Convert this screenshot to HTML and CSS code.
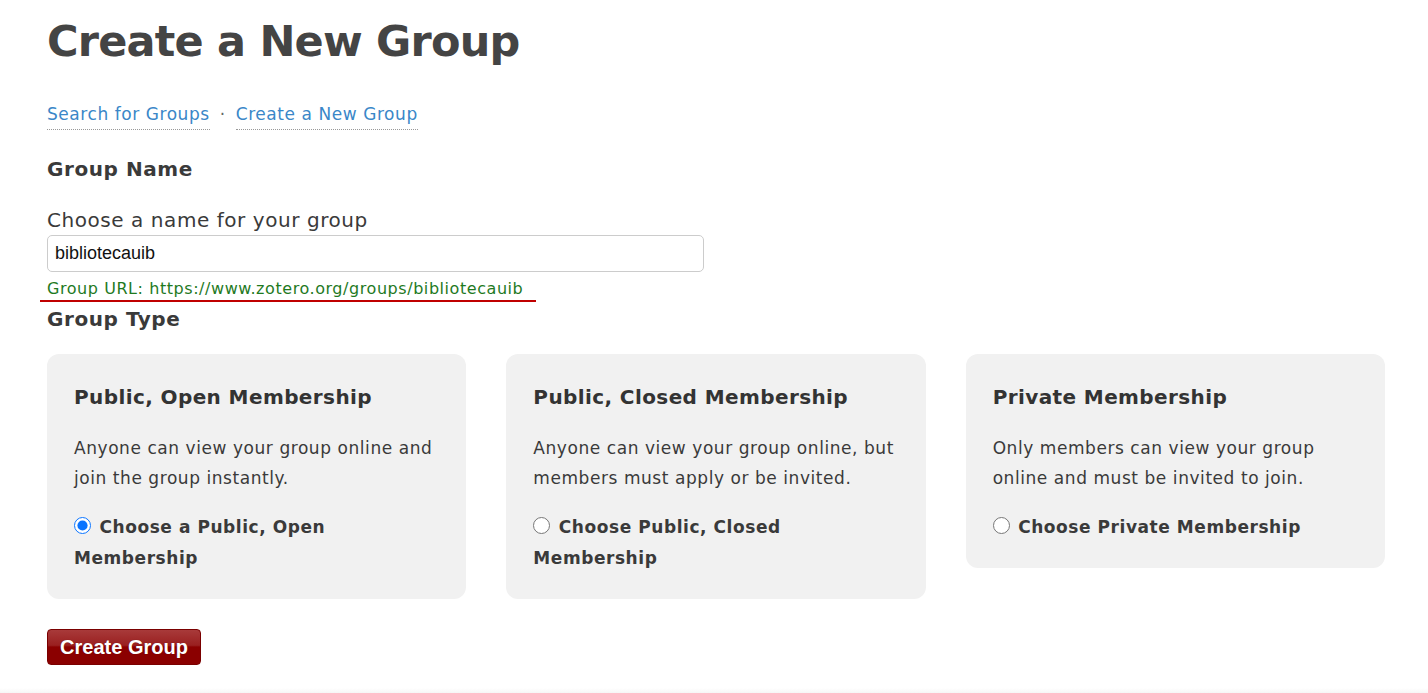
FILE: index.html
```html
<!DOCTYPE html>
<html>
<head>
<meta charset="utf-8">
<link rel="stylesheet" href="styles.css">
</head>
<body>
<main class="page">
  <h1 class="title">Create a New Group</h1>
  <nav class="subnav">
    <a class="subnav-link" href="#">Search for Groups</a>
    <span class="subnav-sep">·</span>
    <a class="subnav-link" href="#">Create a New Group</a>
  </nav>
  <h2 class="section-title">Group Name</h2>
  <label class="field-label" for="name">Choose a name for your group</label>
  <input class="text-input" id="name" type="text" value="bibliotecauib">
  <div class="group-url">Group URL: https://www.zotero.org/groups/bibliotecauib</div>
  <h2 class="section-title type-title">Group Type</h2>
  <div class="cards">
    <div class="card">
      <h3 class="card-title">Public, Open Membership</h3>
      <p class="card-desc">Anyone can view your group online and join the group instantly.</p>
      <label class="card-choice"><input class="radio" type="radio" name="type" checked> Choose a Public, Open Membership</label>
    </div>
    <div class="card">
      <h3 class="card-title">Public, Closed Membership</h3>
      <p class="card-desc">Anyone can view your group online, but members must apply or be invited.</p>
      <label class="card-choice"><input class="radio" type="radio" name="type"> Choose Public, Closed Membership</label>
    </div>
    <div class="card">
      <h3 class="card-title">Private Membership</h3>
      <p class="card-desc">Only members can view your group online and must be invited to join.</p>
      <label class="card-choice"><input class="radio" type="radio" name="type"> Choose Private Membership</label>
    </div>
  </div>
  <button class="submit" type="button">Create Group</button>
</main>
<div class="footer-edge"></div>
</body>
</html>
```
FILE: styles.css
```css
* { box-sizing: border-box; }
html, body { margin: 0; padding: 0; background: #fff; }
body {
  font-family: "DejaVu Sans", Verdana, sans-serif;
  color: #3a3a3a;
  height: 693px;
  overflow: hidden;
  position: relative;
  letter-spacing: 0.035em;
}
.page {
  padding: 0 43px 0 47px;
  display: flex;
  flex-direction: column;
  align-items: flex-start;
}
.title {
  margin: 14px 0 0 0;
  font-size: 43px;
  line-height: 54px;
  font-weight: bold;
  color: #444;
  letter-spacing: -0.8px;
}
.subnav {
  margin-top: 34px;
  display: flex;
  align-items: baseline;
  font-size: 17px;
  line-height: 24px;
}
.subnav-link {
  color: #3a87c8;
  text-decoration: none;
  border-bottom: 1px dotted #999;
  padding-bottom: 3px;
}
.subnav-sep {
  color: #666;
  margin: 0 10px;
}
.section-title {
  margin: 0;
  font-size: 20px;
  line-height: 24px;
  font-weight: bold;
  color: #3a3a3a;
}
.subnav + .section-title { margin-top: 27px; }
.field-label {
  margin-top: 27px;
  font-size: 20px;
  line-height: 24px;
  color: #3a3a3a;
}
.text-input {
  margin-top: 3px;
  width: 657px;
  height: 37px;
  border: 1px solid #ccc;
  border-radius: 5px;
  padding: 0 7px;
  font-family: "Liberation Sans", Arial, sans-serif;
  font-size: 18px;
  letter-spacing: 0;
  color: #111;
  background: #fff;
}
.group-url {
  margin-top: 7px;
  margin-left: -7px;
  padding: 0 13px 1px 7px;
  font-size: 16px;
  line-height: 20px;
  color: #1f7a1f;
  border-bottom: 2px solid #c00000;
}
.type-title { margin-top: 5px; }
.cards {
  margin-top: 23px;
  display: flex;
  align-items: flex-start;
  gap: 40px;
  width: 100%;
}
.card {
  flex: 1 1 0;
  min-width: 0;
  background: #f1f1f1;
  border-radius: 12px;
  padding: 29px 27px 25px 27px;
}
.card-title {
  margin: 0;
  font-size: 20px;
  line-height: 28px;
  font-weight: bold;
  color: #333;
  letter-spacing: 0.02em;
}
.card-desc {
  margin: 22px 0 0 0;
  font-size: 17px;
  line-height: 30px;
  color: #3a3a3a;
}
.card-choice {
  display: block;
  margin-top: 19px;
  font-size: 17px;
  line-height: 31px;
  font-weight: bold;
  color: #3a3a3a;
}
.radio {
  width: 17px;
  height: 17px;
  margin: 0 2px 0 0;
  vertical-align: -1px;
  accent-color: #0a74ff;
}
.submit {
  margin-top: 30px;
  width: 154px;
  height: 36px;
  border: 1px solid #7a0000;
  border-radius: 4px;
  background: linear-gradient(#a83a3a 0%, #9a2020 45%, #8b0000 50%, #8b0000 100%);
  color: #fff;
  font-family: "Liberation Sans", Arial, sans-serif;
  font-size: 20px;
  font-weight: bold;
  letter-spacing: 0;
  padding: 0;
  text-shadow: 0 0 1px rgba(0,0,0,0.3);
}
.footer-edge {
  position: absolute;
  left: 0; right: 0; bottom: 0;
  height: 5px;
  background: linear-gradient(#fff, #f6f6f6);
}
```
